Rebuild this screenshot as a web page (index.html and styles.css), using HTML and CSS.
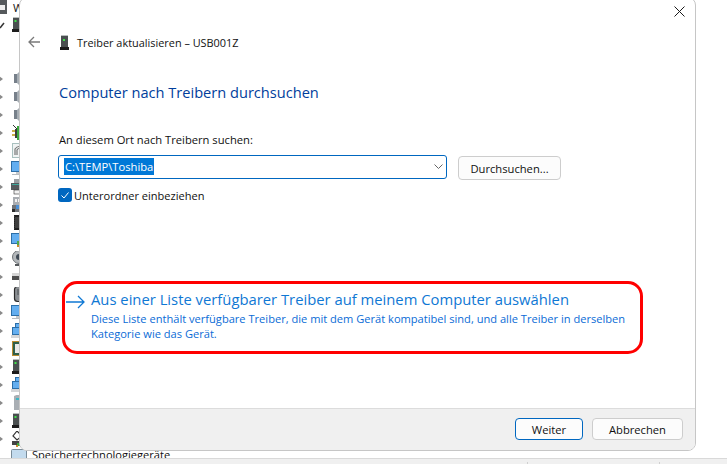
FILE: index.html
```html
<!DOCTYPE html>
<html lang="de">
<head>
<meta charset="utf-8">
<title>Treiber aktualisieren</title>
<link rel="stylesheet" href="styles.css">
</head>
<body>
<svg class="defs" aria-hidden="true">
  <symbol id="chev" viewBox="0 0 11 18"><path d="M-1 6 L3 9 L-1 12Z" fill="#8a8a8a"/></symbol>
  <symbol id="down" viewBox="0 0 11 18"><path d="M0 12 L4 7" fill="none" stroke="#333" stroke-width="1.5"/></symbol>
  <symbol id="usb" viewBox="0 0 16 16"><rect x="2" y="0" width="7" height="12" fill="#4a4f50"/><rect x="2" y="0" width="7" height="1" fill="#b9bdbd"/><rect x="3.5" y="3" width="2" height="2" fill="#3fe04a"/><rect x="1" y="12" width="9" height="3" fill="#1c1c1c"/></symbol>
  <symbol id="speaker" viewBox="0 0 16 16"><rect x="3" y="3" width="3" height="9" fill="#77808a"/><path d="M6 3 L10 -1 V16 L6 12Z" fill="#a6adb3"/></symbol>
  <symbol id="plug" viewBox="0 0 16 16"><path d="M2 0 L9 7" stroke="#333" fill="none"/><rect x="1" y="5" width="6" height="2" fill="#c9b048"/><rect x="1" y="9" width="6" height="2" fill="#c9b048"/><rect x="4" y="4" width="6" height="9" fill="#3a3f3a"/><rect x="6" y="1" width="4" height="14" fill="#3aa83c"/></symbol>
  <symbol id="finger" viewBox="0 0 16 16"><rect x="1.5" y="0.5" width="12" height="14" fill="#f1f4f4" stroke="#a9c0bf"/><path d="M4 12 V6 Q8 1 11 6 V12 M6 12 V7 Q8 4 9 7 V12" fill="none" stroke="#777" stroke-width="1.2"/></symbol>
  <symbol id="mon" viewBox="0 0 16 16"><rect x="0.5" y="0.5" width="14" height="10" fill="#63aef0" stroke="#2d6fa8"/><rect x="5" y="11" width="5" height="2" fill="#c5c9cc"/><rect x="1" y="13" width="12" height="1" fill="#b8bcc0"/></symbol>
  <symbol id="printer" viewBox="0 0 16 16"><rect x="3" y="0" width="9" height="4" fill="#9aa0a3"/><rect x="0" y="4" width="16" height="7" fill="#55595c"/><rect x="1" y="5" width="14" height="1" fill="#3da79a"/><rect x="3" y="11" width="10" height="4" fill="#f2f2f2" stroke="#333" stroke-width=".6"/></symbol>
  <symbol id="multi" viewBox="0 0 16 16"><rect x="2" y="0" width="11" height="8" fill="#a9adb2"/><rect x="4" y="2" width="2" height="3" fill="#f2f2f2"/><rect x="7" y="2" width="2" height="3" fill="#f2f2f2"/><rect x="1" y="8" width="13" height="7" fill="#6f7378"/><rect x="5" y="8" width="3" height="4" fill="#4b8fd6"/><rect x="1" y="12" width="3" height="3" fill="#2b2b2b"/><rect x="8" y="11" width="3" height="3" fill="#c95a3a"/></symbol>
  <symbol id="chip" viewBox="0 0 16 16"><rect x="2" y="0" width="12" height="15" fill="#1f1f1f"/><rect x="2" y="0" width="1" height="15" fill="#fff" stroke-dasharray="1" stroke="#fff" stroke-width=".2"/><rect x="4" y="2" width="10" height="11" fill="#3e3e3e"/></symbol>
  <symbol id="monnet" viewBox="0 0 16 16"><rect x="0.5" y="0.5" width="14" height="10" fill="#63aef0" stroke="#2d6fa8"/><rect x="6" y="8" width="5" height="4" fill="#4fa84f"/><rect x="6" y="12" width="3" height="2" fill="#d08a2b"/></symbol>
  <symbol id="cam" viewBox="0 0 16 16"><circle cx="8" cy="6" r="6.5" fill="#b3b7ba" stroke="#6d7175"/><circle cx="8" cy="6" r="3" fill="#3f4a55"/><rect x="4" y="13" width="9" height="2" fill="#55595c"/></symbol>
  <symbol id="drive" viewBox="0 0 16 16"><rect x="1" y="4" width="14" height="3" fill="#d6d6d6"/><rect x="1" y="7" width="14" height="4" fill="#4e4e4e"/></symbol>
  <symbol id="ipod" viewBox="0 0 16 16"><rect x="3.5" y="-0.5" width="11" height="15" rx="3" fill="#8b8f93" stroke="#2a2a2a" stroke-width="1.2"/><rect x="6" y="2" width="6" height="6" fill="#6a6e72"/></symbol>
  <symbol id="net" viewBox="0 0 16 16"><rect x="4.5" y="0.5" width="10" height="7" fill="#63aef0" stroke="#2d6fa8"/><rect x="1.5" y="4.5" width="10" height="7" fill="#63aef0" stroke="#2d6fa8"/><rect x="0" y="12" width="9" height="3" fill="#d4d6d8"/><rect x="8" y="10" width="6" height="4" fill="#49a849"/></symbol>
  <symbol id="board" viewBox="0 0 16 16"><rect x="1" y="0" width="14" height="15" fill="#b8892f"/><rect x="2" y="1" width="12" height="13" fill="#2f5f4a"/><rect x="4" y="3" width="8" height="9" fill="#e9e9e9"/></symbol>
  <symbol id="box" viewBox="0 0 16 16"><path d="M3 1 L8 -1 H16 V15 H3Z" fill="#a9aeb3"/><rect x="5" y="3" width="3" height="2" fill="#3db6c4"/></symbol>
  <symbol id="key" viewBox="0 0 16 16"><path d="M6 0 L11 5 L6 9 L2 5Z" fill="#fff" stroke="#333" stroke-width="1.2"/><rect x="1" y="10" width="8" height="4" fill="#444"/><rect x="6" y="12" width="5" height="3" fill="#3aa83c"/><rect x="5" y="14" width="2" height="2" fill="#d08a2b"/></symbol>
  <symbol id="store" viewBox="0 0 16 16"><rect x="0.5" y="0.5" width="15" height="15" rx="1" fill="#c3dbee" stroke="#7a8c99"/></symbol>
</svg>

<main class="tree">
  <div class="row row-top"><svg class="top-ico" viewBox="0 0 7 14"><rect width="7" height="14" fill="#55595c"/><rect y="5" width="5" height="5" fill="#eee"/></svg><span class="w">WSD-Drucker</span></div>
  <div class="row"><svg class="chev"><use href="#down"/></svg><svg class="ico"><use href="#usb"/></svg></div>
  <div class="row"></div>
  <div class="row"></div>
  <div class="row"><svg class="chev"><use href="#chev"/></svg><svg class="ico"><use href="#speaker"/></svg></div>
  <div class="row"><svg class="chev"><use href="#chev"/></svg><svg class="ico"><use href="#speaker"/></svg></div>
  <div class="row"><svg class="chev"><use href="#chev"/></svg><svg class="ico"><use href="#speaker"/></svg></div>
  <div class="row"><svg class="chev"><use href="#chev"/></svg><svg class="ico"><use href="#plug"/></svg></div>
  <div class="row"><svg class="chev"><use href="#chev"/></svg><svg class="ico"><use href="#finger"/></svg></div>
  <div class="row"><svg class="chev"><use href="#chev"/></svg><svg class="ico"><use href="#mon"/></svg></div>
  <div class="row"><svg class="chev"><use href="#chev"/></svg><svg class="ico"><use href="#printer"/></svg></div>
  <div class="row"><svg class="chev"><use href="#chev"/></svg><svg class="ico"><use href="#multi"/></svg></div>
  <div class="row"><svg class="chev"><use href="#chev"/></svg><svg class="ico"><use href="#chip"/></svg></div>
  <div class="row"><svg class="chev"><use href="#chev"/></svg><svg class="ico"><use href="#monnet"/></svg></div>
  <div class="row"><svg class="chev"><use href="#chev"/></svg><svg class="ico"><use href="#cam"/></svg></div>
  <div class="row"><svg class="chev"><use href="#chev"/></svg><svg class="ico"><use href="#drive"/></svg></div>
  <div class="row"><svg class="chev"><use href="#chev"/></svg><svg class="ico"><use href="#ipod"/></svg></div>
  <div class="row"><svg class="chev"><use href="#chev"/></svg><svg class="ico"><use href="#mon"/></svg></div>
  <div class="row"><svg class="chev"><use href="#chev"/></svg><svg class="ico"><use href="#net"/></svg></div>
  <div class="row"><svg class="chev"><use href="#chev"/></svg><svg class="ico"><use href="#board"/></svg></div>
  <div class="row"><svg class="chev"><use href="#chev"/></svg><svg class="ico"><use href="#usb"/></svg></div>
  <div class="row"><svg class="chev"><use href="#chev"/></svg><svg class="ico"><use href="#net"/></svg></div>
  <div class="row"><svg class="chev"><use href="#chev"/></svg><svg class="ico"><use href="#box"/></svg></div>
  <div class="row"><svg class="chev"><use href="#chev"/></svg><svg class="ico"><use href="#usb"/></svg></div>
  <div class="row"><svg class="chev"><use href="#chev"/></svg><svg class="ico"><use href="#key"/></svg></div>
  <div class="row"><span class="chev"></span><svg class="ico"><use href="#store"/></svg><span class="tree-label">Speichertechnologiegeräte</span></div>
</main>
<footer class="status"><span class="cell cell-a"></span><span class="cell cell-b"></span><span class="cell"></span></footer>

<section class="dialog">
  <div class="close-row">
    <svg class="close" viewBox="0 0 11 11"><path d="M.5.5 10.5 10.5M10.5.5.5 10.5" fill="none" stroke="#1a1a1a"/></svg>
  </div>
  <div class="nav">
    <svg class="back" viewBox="0 0 12 12"><path d="M12 6H1M6 1 1 6l5 5" fill="none" stroke="#7a7a7a" stroke-width="1.3"/></svg>
    <svg class="nav-ico" viewBox="0 0 9 15"><rect x="1" y="0" width="7" height="12" fill="#4a4f50"/><rect x="1" y="0" width="7" height="1" fill="#b9bdbd"/><rect x="3" y="4" width="2" height="2" fill="#3fe04a"/><rect y="12" width="9" height="3" fill="#1c1c1c"/></svg>
    <span class="nav-title">Treiber aktualisieren – USB001Z</span>
  </div>
  <div class="content">
    <h1 class="heading">Computer nach Treibern durchsuchen</h1>
    <p class="label">An diesem Ort nach Treibern suchen:</p>
    <div class="path-row">
      <div class="combo">
        <span class="selected">C:\TEMP\Toshiba</span>
        <svg class="caret" viewBox="0 0 9 5"><path d="M.5.5 4.5 4.5 8.5.5" fill="none" stroke="#666"/></svg>
      </div>
      <button class="btn btn-browse" type="button">Durchsuchen...</button>
    </div>
    <label class="check-row">
      <svg class="check" viewBox="0 0 14 14"><rect width="14" height="14" rx="3" fill="#0067c0"/><path d="M3.5 7.5 6 10l4.5-5.5" fill="none" stroke="#fff"/></svg>
      <span>Unterordner einbeziehen</span>
    </label>
    <a class="link-box">
      <svg class="link-arrow" viewBox="0 0 19 14"><path d="M0 7H18M12 1l6 6-6 6" fill="none" stroke="#0f78d4" stroke-width="1.3"/></svg>
      <div class="link-text">
        <div class="link-title">Aus einer Liste verfügbarer Treiber auf meinem Computer auswählen</div>
        <div class="link-desc">Diese Liste enthält verfügbare Treiber, die mit dem Gerät kompatibel sind, und alle Treiber in derselben Kategorie wie das Gerät.</div>
      </div>
    </a>
  </div>
  <div class="actions">
    <button class="btn btn-primary" type="button">Weiter</button>
    <button class="btn btn-cancel" type="button">Abbrechen</button>
  </div>
</section>
</body>
</html>
```
FILE: styles.css
```css
* { box-sizing: border-box; }
html, body { margin: 0; height: 100%; }
body {
  width: 727px; height: 464px; overflow: hidden; position: relative;
  display: flex; flex-direction: column; background: #fff;
  font-family: "Open Sans", "Noto Sans", sans-serif; font-size: 11.2px; color: #111;
}
.defs { width: 0; height: 0; display: block; }
.tree { flex: 1; min-height: 0; overflow: hidden; margin-top: -2px; }
.row { height: 18px; display: flex; align-items: center; }
.chev { width: 11px; height: 18px; flex: none; }
.ico { width: 16px; height: 16px; flex: none; overflow: visible; }
.top-ico { width: 7px; height: 14px; flex: none; }
.w { margin-left: 6px; }
.tree-label { margin-left: 5px; font-size: 11.1px; line-height: 13px; align-self: flex-start; }
.status { height: 6px; flex: none; background: #f0f0f0; border-top: 1px solid #d9d9d9; display: flex; padding-top: 3px; }
.cell { border-left: 1px solid #d0d0d0; height: 3px; }
.cell-a { border-left: 0; width: 527px; }
.cell-b { width: 132px; }

.dialog {
  position: absolute; left: 19px; top: -3px; width: 677px; height: 454px;
  background: #fff; border: 1px solid #c6c6c6; border-radius: 8px; overflow: hidden;
  display: flex; flex-direction: column;
}
.close-row { height: 28px; padding: 8px 10px 0 0; display: flex; justify-content: flex-end; flex: none; }
.close { width: 11px; height: 11px; }
.nav { height: 18px; margin-top: 7px; padding-left: 8px; display: flex; align-items: center; flex: none; }
.back { width: 12px; height: 12px; flex: none; }
.nav-ico { width: 9px; height: 15px; margin-left: 20px; flex: none; }
.nav-title { margin-left: 8px; font-size: 10.9px; }
.content { flex: 1; padding-left: 39px; display: flex; flex-direction: column; align-items: flex-start; }
.heading { margin: 30px 0 0; font-size: 14.6px; line-height: 22px; font-weight: 400; color: #003e9c; }
.label { margin: 29px 0 0; line-height: 16px; }
.path-row { margin: 7px 0 0 -1px; display: flex; gap: 11px; align-items: flex-start; }
.combo {
  width: 389px; height: 24px; border: 1px solid #0067c0; border-radius: 3px;
  padding: 2px 0 0 5px; display: flex; justify-content: space-between; align-items: flex-start;
}
.selected { background: #0078d7; color: #fff; height: 17px; line-height: 17px; padding: 0 1px; }
.caret { width: 9px; height: 5px; margin: 6px 3px 0 0; }
.btn {
  font: inherit; color: #111; background: #fcfcfc; border: 1px solid #cdcdcd; border-radius: 4px;
  padding: 0; display: flex; align-items: center; justify-content: center;
}
.btn-browse { width: 103px; height: 24px; margin-top: 1px; }
.check-row { margin: 8px 0 0 -1px; height: 14px; display: flex; align-items: center; gap: 2px; font-size: 11.05px; }
.check { width: 14px; height: 14px; flex: none; }
.link-box {
  margin: 79px 0 0 3px; width: 581px; height: 73px; border: 3px solid #f00; border-radius: 15px;
  display: flex; color: #0f78d4;
}
.link-arrow { width: 19px; height: 14px; flex: none; margin: 11px 0 0 1px; }
.link-text { margin-left: 6px; width: 545px; padding-top: 5px; }
.link-title { font-size: 14.8px; line-height: 20px; }
.link-desc { font-size: 11.1px; line-height: 15px; color: #0a6bd6; margin-top: 2px; }
.actions {
  height: 42px; flex: none; background: #f0f0f0; border-top: 1px solid #dcdcdc;
  display: flex; justify-content: flex-end; gap: 9px; padding: 9px 12px 0 0;
}
.btn-primary { width: 68px; height: 22px; border-color: #0067c0; }
.btn-cancel { width: 91px; height: 22px; }
```
